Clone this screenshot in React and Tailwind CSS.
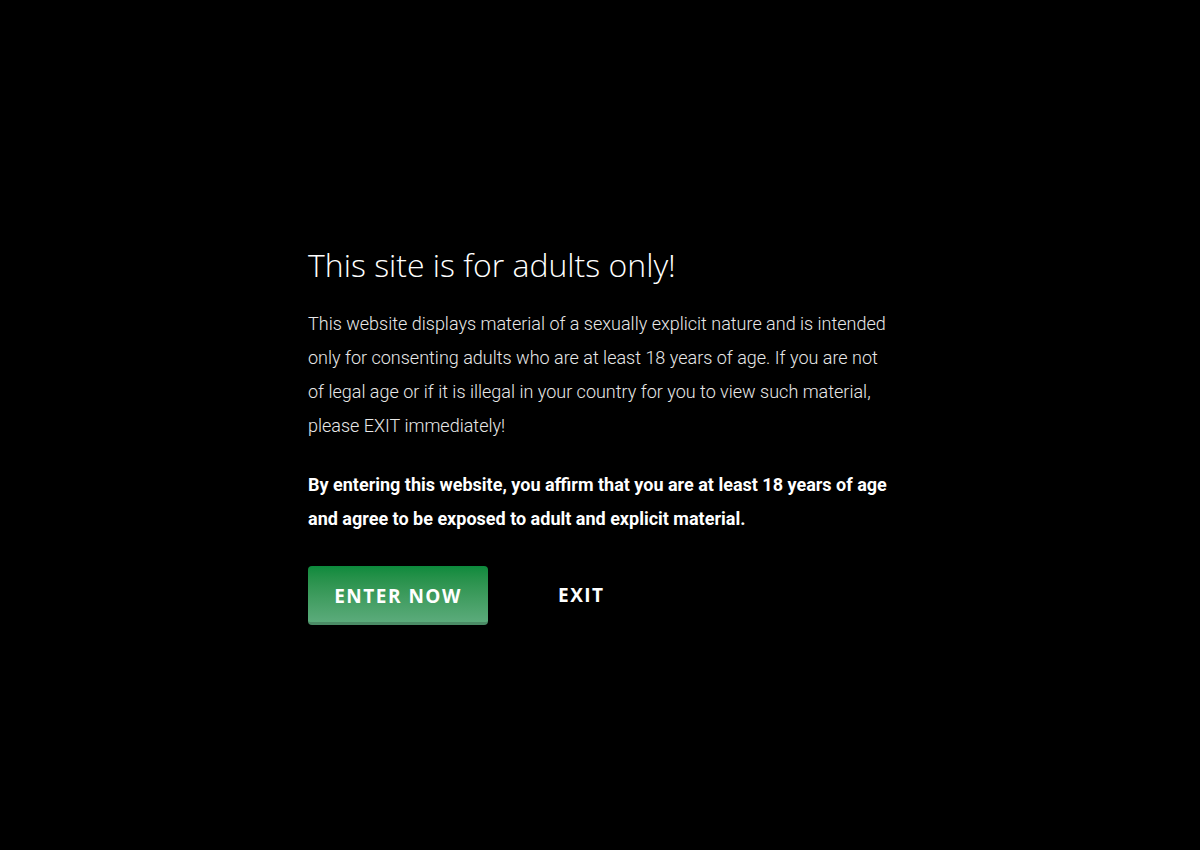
export default function App() {
  return (
    <div className="min-h-screen w-full bg-black text-white">
      <div className="mx-auto w-[584px] pt-[243px]">
        <h1 className="text-[32px] font-light leading-[44px] text-white" style={{ fontFamily: '"Open Sans", sans-serif' }}>
          This site is for adults only!
        </h1>
        <div style={{ fontFamily: 'Roboto, sans-serif' }}>
          <p className="mt-[20px] text-[18px] font-light leading-[34px] text-[#e8e8e8]">
            This website displays material of a sexually explicit nature and is intended only for consenting adults who are at least 18 years of age. If you are not of legal age or if it is illegal in your country for you to view such material, please EXIT immediately!
          </p>
          <p className="mt-[25px] text-[18px] font-bold leading-[34px] text-white">
            By entering this website, you affirm that you are at least 18 years of age and agree to be exposed to adult and explicit material.
          </p>
        </div>
        <div className="mt-[30px] flex items-center gap-[70px]" style={{ fontFamily: '"Open Sans", sans-serif' }}>
          <button className="h-[59px] w-[180px] rounded-[4px] border-b-[3px] border-[#4b8c66] bg-gradient-to-b from-[#0b8a3c] to-[#5bab7b] pt-[5px] text-[19px] font-bold tracking-[1.5px] text-white">
            ENTER NOW
          </button>
          <button className="text-[19px] font-bold tracking-[1.5px] text-white">EXIT</button>
        </div>
      </div>
    </div>
  )
}
